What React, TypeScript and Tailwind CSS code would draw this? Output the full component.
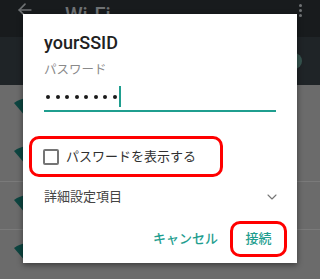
import { ArrowLeft, ChevronDown } from "lucide-react";

const font = { fontFamily: '"Roboto", "Noto Sans CJK JP", sans-serif' };

const WifiWedge = () => (
  <svg width="24" height="20" viewBox="0 0 24 20" className="absolute left-[14px] top-[12px]">
    <path d="M0 6 Q12 -3 24 6 L12 20 Z" fill="#0d4540" />
  </svg>
);

const App = () => {
  return (
    <div className="relative w-[320px] h-[279px] overflow-hidden bg-[#6b6b6b]" style={font}>
      {/* App bar (dimmed) */}
      <div className="h-[37px] bg-[#181b1d] flex items-start">
        <ArrowLeft className="ml-[15px] mt-[0px] w-[20px] h-[20px] text-[#6f7274]" strokeWidth={2} />
        <span className="ml-[30px] mt-[3px] text-[20px] leading-[24px] font-medium text-[#6f7274]">Wi-Fi</span>
        <div className="ml-auto mr-[18px] mt-[4px] flex flex-col gap-[2px]">
          <span className="w-[3px] h-[3px] rounded-full bg-[#707375]" />
          <span className="w-[3px] h-[3px] rounded-full bg-[#707375]" />
          <span className="w-[3px] h-[3px] rounded-full bg-[#707375]" />
        </div>
      </div>

      {/* Switch band */}
      <div className="h-[48px] bg-[#1f2427] flex items-center justify-end">
        <span className="w-[16px] h-[16px] rounded-full bg-[#375550] mr-[18px] mt-[-1px]" />
      </div>

      {/* Network list */}
      <div className="relative h-[48px]"><WifiWedge /></div>
      <div className="relative h-[48px]"><WifiWedge /></div>
      <div className="relative h-[48px] border-t border-[#7a7a7a]"><WifiWedge /></div>
      <div className="relative h-[48px] border-t border-[#7a7a7a]"><WifiWedge /></div>

      {/* Dialog */}
      <div className="absolute left-[23px] top-[14px] w-[274px] h-[249px] bg-white shadow-[0_2px_6px_rgba(0,0,0,0.45)] pt-[17px] px-[21px] flex flex-col">
        <div className="text-[18px] leading-[24px] font-medium text-[#212121]">yourSSID</div>
        <div className="mt-[7px] text-[12.5px] leading-[16px] text-[#8a8a8a]">パスワード</div>
        <div className="mt-[6px] h-[28px] border-b-2 border-[#1f9e8f] flex items-center pl-[2px]">
          <div className="flex gap-[5.5px] items-center">
            {[...Array(8)].map((_, i) => (
              <span key={i} className="w-[4px] h-[4px] rounded-full bg-[#1a1a1a]" />
            ))}
          </div>
          <span className="ml-[2px] w-[2px] h-[21px] bg-[#1f9e8f] mb-[2px]" />
        </div>

        <div className="mt-[24px] -ml-[15px] w-[194px] h-[41px] border-[3px] border-[#ff0000] rounded-[10px] flex items-center pl-[11px]">
          <span className="w-[16px] h-[16px] border-2 border-[#757575] rounded-[2px]" />
          <span className="ml-[7px] text-[13px] text-[#303030]">パスワードを表示する</span>
        </div>

        <div className="h-[40px] flex items-center justify-between">
          <span className="text-[13px] text-[#444]">詳細設定項目</span>
          <ChevronDown className="w-[16px] h-[16px] text-[#757575] mr-[-4px]" strokeWidth={1.6} />
        </div>

        <div className="mt-[4px] -mr-[11px] flex items-center justify-end">
          <span className="text-[13px] font-medium text-[#1f9e8f]">キャンセル</span>
          <div className="ml-[12px] w-[57px] h-[36px] border-[3px] border-[#ff0000] rounded-[10px] flex items-center justify-center">
            <span className="text-[13px] font-medium text-[#1f9e8f]">接続</span>
          </div>
        </div>
      </div>
    </div>
  );
};

export default App;
